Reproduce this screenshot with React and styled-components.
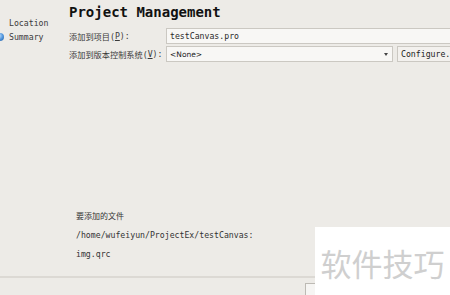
import React from 'react'
import styled, { createGlobalStyle } from 'styled-components'

const Global = createGlobalStyle`
    html, body {
        margin: 0;
        padding: 0;
        background: #edebe7;
        overflow: hidden;
    }
`

const Window = styled.div`
    position: relative;
    width: 450px;
    height: 295px;
    display: flex;
    flex-direction: column;
    background: #edebe7;
    color: #2e2e2e;
    font-family: "DejaVu Sans Mono", "Noto Sans CJK SC", monospace;
    font-size: 8.2px;
    overflow: hidden;
`

const Body = styled.div`
    display: flex;
    height: 276px;
`

const Side = styled.div`
    width: 69px;
    flex-shrink: 0;
    padding-top: 16px;
    box-sizing: border-box;
`

const Step = styled.div`
    display: flex;
    align-items: center;
    height: 14px;
    padding-left: 9px;
    position: relative;
    color: #3a3a3a;
`

const Bullet = styled.span`
    position: absolute;
    left: -4px;
    top: 3px;
    width: 8px;
    height: 8px;
    border-radius: 50%;
    background: radial-gradient(circle at 40% 35%, #bfe0ff 0, #4a90d9 55%, #2a5f9e 100%);
`

const Main = styled.div`
    flex: 1;
    display: flex;
    flex-direction: column;
    min-width: 0;
`

const Title = styled.div`
    font-family: "DejaVu Sans Mono", monospace;
    font-weight: bold;
    font-size: 14px;
    color: #111;
    height: 21px;
    padding-top: 4px;
    box-sizing: border-box;
    line-height: 16px;
`

const Form = styled.div`
    display: grid;
    grid-template-columns: 97px 1fr;
    row-gap: 2px;
    margin-top: 7px;
`

const Label = styled.div`
    display: flex;
    align-items: center;
    height: 16px;
    color: #3a3a3a;
    white-space: nowrap;
    u { text-decoration: underline; }
`

const Field = styled.div`
    height: 16px;
    box-sizing: border-box;
    border: 1px solid #cbc8c2;
    background: #f8f7f5;
    display: flex;
    align-items: center;
    padding-left: 3px;
    color: #2a2a2a;
    margin-right: -2px;
`

const ComboRow = styled.div`
    display: flex;
    gap: 4px;
`

const Combo = styled.div`
    width: 227px;
    height: 16px;
    box-sizing: border-box;
    border: 1px solid #cbc8c2;
    background: #f8f7f5;
    display: flex;
    align-items: center;
    justify-content: space-between;
    padding: 0 4px 0 3px;
    font-family: "DejaVu Sans", sans-serif;
    font-size: 7.5px;
    color: #222;
`

const Arrow = styled.span`
    width: 0;
    height: 0;
    border-left: 2.5px solid transparent;
    border-right: 2.5px solid transparent;
    border-top: 3px solid #444;
`

const Button = styled.div`
    height: 16px;
    box-sizing: border-box;
    border: 1px solid #cbc8c2;
    background: #f3f1ee;
    display: flex;
    align-items: center;
    padding-left: 3px;
    color: #222;
    white-space: nowrap;
    flex: 1;
    margin-right: -8px;
`

const Files = styled.div`
    margin-top: auto;
    padding-left: 7px;
    padding-bottom: 12px;
    display: flex;
    flex-direction: column;
`

const FileLine = styled.div`
    height: 19px;
    line-height: 19px;
    font-size: ${props => props.cjk ? '8px' : '8.2px'};
    color: #333;
    white-space: nowrap;
`

const Footer = styled.div`
    flex: 1;
    border-top: 2px solid #dcd9d4;
    display: flex;
    justify-content: flex-end;
    align-items: flex-end;
    padding-right: 131px;
`

const PushButton = styled.div`
    width: 12px;
    height: 11px;
    border: 1px solid #bdbab4;
    border-bottom: none;
    background: #f6f5f3;
`

const Watermark = styled.div`
    position: absolute;
    left: 315px;
    top: 227px;
    width: 135px;
    height: 68px;
    background: #ffffff;
    display: flex;
    align-items: flex-start;
    justify-content: center;
    padding-top: 13px;
    box-sizing: border-box;
    font-family: "Noto Sans CJK SC", sans-serif;
    font-size: 31px;
    color: #cfcfcf;
`

export default function App() {
    return (
        <>
            <Global />
            <Window>
                <Body>
                    <Side>
                        <Step>Location</Step>
                        <Step><Bullet />Summary</Step>
                    </Side>
                    <Main>
                        <Title>Project Management</Title>
                        <Form>
                            <Label>添加到项目(<u>P</u>):</Label>
                            <Field>testCanvas.pro</Field>
                            <Label>添加到版本控制系统(<u>V</u>):</Label>
                            <ComboRow>
                                <Combo>&lt;None&gt;<Arrow /></Combo>
                                <Button>Configure.</Button>
                            </ComboRow>
                        </Form>
                        <Files>
                            <FileLine cjk>要添加的文件</FileLine>
                            <FileLine>/home/wufeiyun/ProjectEx/testCanvas:</FileLine>
                            <FileLine>img.qrc</FileLine>
                        </Files>
                    </Main>
                </Body>
                <Footer>
                    <PushButton />
                </Footer>
                <Watermark>软件技巧</Watermark>
            </Window>
        </>
    )
}
